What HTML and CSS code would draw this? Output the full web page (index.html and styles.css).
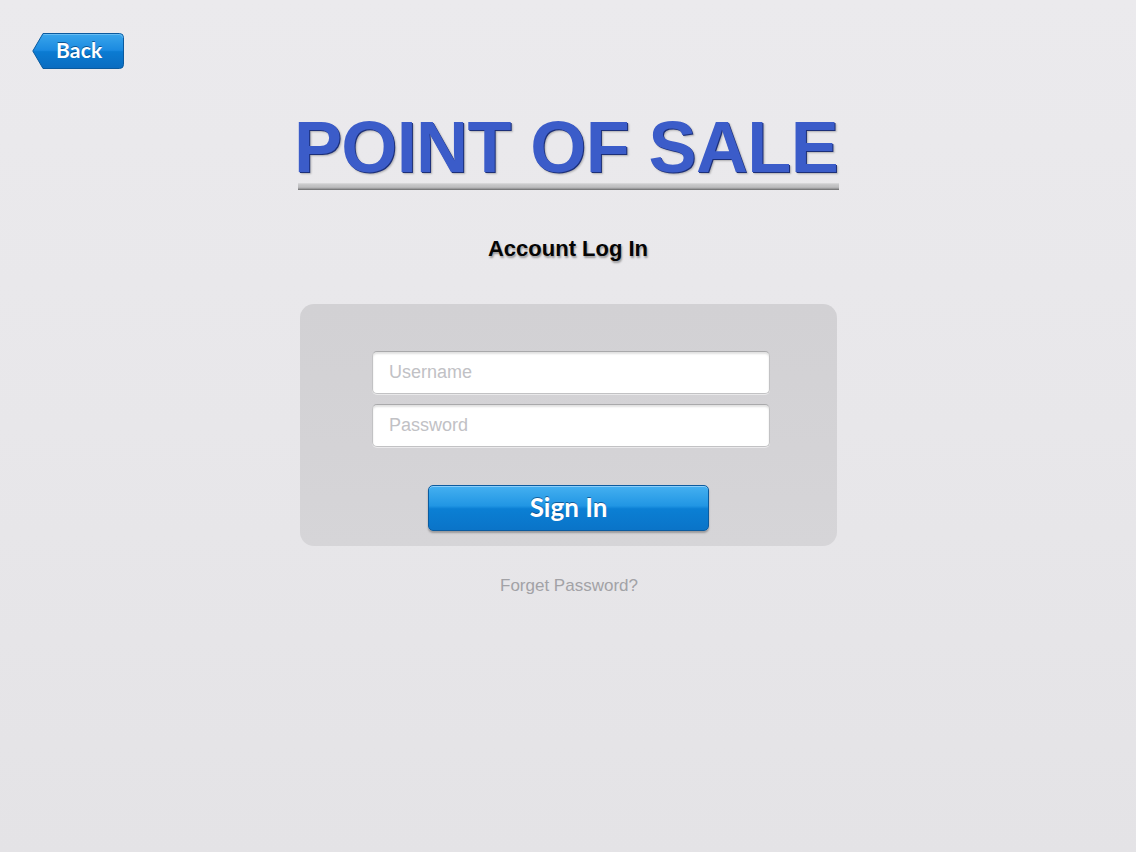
FILE: index.html
```html
<!DOCTYPE html>
<html lang="en">
<head>
<meta charset="utf-8">
<title>Point of Sale - Account Log In</title>
<link rel="stylesheet" href="styles.css">
</head>
<body>
<div class="page">
  <header class="topbar">
    <a class="back" href="#">
      <svg class="back-shape" width="92" height="36" viewBox="0 0 92 36" aria-hidden="true">
        <defs>
          <linearGradient id="bg" x1="0" y1="0" x2="0" y2="1">
            <stop offset="0" stop-color="#3aa6ec"/>
            <stop offset="0.48" stop-color="#1b8ae0"/>
            <stop offset="0.52" stop-color="#0b7bd2"/>
            <stop offset="1" stop-color="#0a6cc0"/>
          </linearGradient>
        </defs>
        <path d="M11 0.5 H87.5 Q91.5 0.5 91.5 4.5 V31.5 Q91.5 35.5 87.5 35.5 H11 L0.8 18 Z" fill="url(#bg)" stroke="#0b5a9e" stroke-width="1"/>
        <path d="M11.5 1.5 H87.5 Q90.5 1.5 90.5 4.5" fill="none" stroke="#7cc6f5" stroke-width="1" opacity="0.7"/>
      </svg>
      <span class="back-label">Back</span>
    </a>
  </header>

  <main class="content">
    <h1 class="title">POINT OF SALE</h1>
    <div class="title-bar"></div>

    <h2 class="subtitle">Account Log In</h2>

    <form class="panel" onsubmit="return false">
      <input class="field" type="text" placeholder="Username">
      <input class="field" type="password" placeholder="Password">
      <button class="signin" type="submit">Sign In</button>
    </form>

    <a class="forgot" href="#">Forget Password?</a>
  </main>
</div>
</body>
</html>
```

FILE: styles.css
```css
html, body {
  margin: 0;
  padding: 0;
}

body {
  width: 1136px;
  height: 852px;
  overflow: hidden;
  background: linear-gradient(180deg, #ebeaed 0%, #e8e7ea 50%, #e4e3e6 100%);
  font-family: "Liberation Sans", Arial, sans-serif;
}

.page {
  height: 852px;
  display: flex;
  flex-direction: column;
}

.topbar {
  padding: 33px 0 0 32px;
  height: 35px;
}

.back {
  position: relative;
  display: inline-flex;
  align-items: center;
  width: 92px;
  height: 36px;
  text-decoration: none;
}

.back-shape {
  position: absolute;
  left: 0;
  top: 0;
}

.back-label {
  position: relative;
  margin-left: 24px;
  margin-top: -4px;
  font-family: Lato, "Open Sans", sans-serif;
  font-weight: 700;
  font-size: 21px;
  color: #ffffff;
  text-shadow: 0 -1px 0 rgba(0, 40, 90, 0.6);
  letter-spacing: 0.2px;
}

.content {
  display: flex;
  flex-direction: column;
  align-items: center;
}

.title {
  margin: 43px 4px 0 0;
  font-family: "Liberation Sans", Arial, sans-serif;
  font-weight: 700;
  font-size: 72px;
  line-height: 72px;
  color: #3b5cc9;
  letter-spacing: -0.6px;
  text-shadow: 1px 1px 0 #1c2f78, 2px 2px 2px rgba(0, 0, 0, 0.25);
}

.title-bar {
  width: 541px;
  height: 7px;
  box-sizing: border-box;
  background: linear-gradient(180deg, #dcdcde 0%, #c6c6c8 30%, #bdbdbf 70%, #8e8e90 100%);
  border-bottom: 1px solid #7a7a7c;
}

.subtitle {
  margin: 46px 0 0 0;
  font-family: "Liberation Sans", Arial, sans-serif;
  font-weight: 700;
  font-size: 22px;
  line-height: 26px;
  color: #050505;
  text-shadow: 1px 2px 2px rgba(0, 0, 0, 0.35);
}

.panel {
  margin: 42px 0 0 1px;
  width: 537px;
  box-sizing: border-box;
  padding: 47px 0 15px 72px;
  border-radius: 14px;
  background: linear-gradient(180deg, #d2d1d4 0%, #d4d3d6 60%, #d6d5d8 100%);
  display: flex;
  flex-direction: column;
  align-items: flex-start;
}

.field {
  width: 398px;
  height: 43px;
  box-sizing: border-box;
  margin: 0 0 10px 0;
  padding: 0 16px;
  border: 1px solid #c2c2c4;
  border-top-color: #a9a9ab;
  border-radius: 5px;
  background: #ffffff;
  box-shadow: inset 0 2px 2px rgba(0, 0, 0, 0.12), 0 1px 0 rgba(255, 255, 255, 0.5);
  font-family: "Liberation Sans", Arial, sans-serif;
  font-size: 18px;
  color: #333;
  outline: none;
}

.field::placeholder {
  color: #c1c1c5;
}

.signin {
  margin: 28px 0 0 56px;
  width: 281px;
  height: 46px;
  border: 1px solid #0b5b9f;
  border-radius: 5px;
  background: linear-gradient(180deg, #45b0f0 0%, #2196e4 45%, #0b7fd4 52%, #0a74c8 100%);
  box-shadow: inset 0 1px 0 rgba(170, 220, 255, 0.7), 0 2px 2px rgba(0, 0, 0, 0.28);
  font-family: Lato, "Open Sans", sans-serif;
  font-weight: 700;
  font-size: 26px;
  color: #ffffff;
  text-shadow: 0 -1px 0 rgba(0, 40, 90, 0.55);
  padding: 0 0 3px 0;
  cursor: pointer;
}

.forgot {
  margin: 30px 0 0 2px;
  font-family: "Liberation Sans", Arial, sans-serif;
  font-size: 17px;
  line-height: 20px;
  color: #a2a2a6;
  text-decoration: none;
}
```
